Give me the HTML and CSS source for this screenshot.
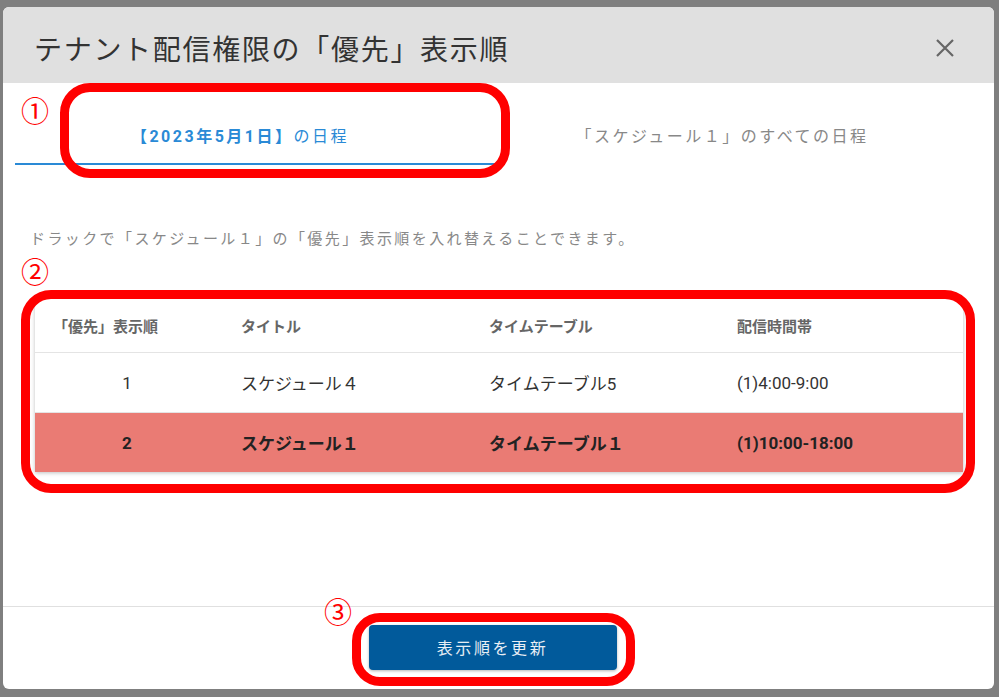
FILE: index.html
```html
<!DOCTYPE html>
<html lang="ja">
<head>
    <meta charset="UTF-8">
    <title>テナント配信権限の「優先」表示順</title>
    <link rel="stylesheet" href="styles.css">
</head>
<body>
    <div class="modal">
        <div class="modal-head">
            <h1>テナント配信権限の「優先」表示順</h1>
            <button class="close" type="button" aria-label="閉じる">
                <svg width="18" height="18" viewBox="0 0 18 18"><path d="M1 1 L17 17 M17 1 L1 17" stroke="#666" stroke-width="2.2" fill="none"/></svg>
            </button>
        </div>

        <div class="tabs">
            <div class="tab active"><b>【2023年5月1日】</b>の日程</div>
            <div class="tab">「スケジュール１」のすべての日程</div>
        </div>

        <div class="modal-body">
            <p class="hint">ドラックで「スケジュール１」の「優先」表示順を入れ替えることできます。</p>
            <div class="order-table">
                <div class="cell head first">「優先」表示順</div>
                <div class="cell head">タイトル</div>
                <div class="cell head">タイムテーブル</div>
                <div class="cell head">配信時間帯</div>

                <div class="cell first">1</div>
                <div class="cell">スケジュール４</div>
                <div class="cell">タイムテーブル5</div>
                <div class="cell">(1)4:00-9:00</div>

                <div class="cell first sel">2</div>
                <div class="cell sel">スケジュール１</div>
                <div class="cell sel">タイムテーブル１</div>
                <div class="cell sel">(1)10:00-18:00</div>
            </div>
        </div>

        <div class="modal-foot">
            <button class="btn-update" type="button">表示順を更新</button>
        </div>

        <!-- annotation marks -->
        <span class="mark mark-1">①</span>
        <span class="ring ring-1"></span>
        <span class="mark mark-2">②</span>
        <span class="ring ring-2"></span>
        <span class="mark mark-3">③</span>
        <span class="ring ring-3"></span>
    </div>
</body>
</html>
```

FILE: styles.css
```css
* {
    box-sizing: border-box;
}
body {
    margin: 0;
    padding: 7px 5px 0 3px;
    background-color: #7f7f7f;
    font-family: Roboto, "Noto Sans CJK JP", sans-serif;
    color: #333;
    height: 697px;
    overflow: hidden;
}
.modal {
    position: relative;
    width: 991px;
    height: 682px;
    background-color: #fff;
    border-radius: 6px;
    overflow: hidden;
    display: flex;
    flex-direction: column;
}
.modal-head {
    height: 76px;
    background-color: #e0e0e0;
    display: flex;
    align-items: center;
    justify-content: space-between;
    padding: 5px 40px 0 31px;
}
.modal-head h1 {
    margin: 0;
    font-size: 28px;
    font-weight: 400;
    letter-spacing: 1.7px;
    color: #333;
}
.close {
    border: none;
    background: none;
    padding: 0;
    display: flex;
    cursor: pointer;
}
.tabs {
    display: flex;
    margin-left: 12px;
    height: 82px;
}
.tab {
    width: 482px;
    padding: 40px 32px 0 0;
    text-align: center;
    font-size: 16px;
    letter-spacing: 2.5px;
    color: #888;
}
.tab.active {
    color: #2a8ad6;
    border-bottom: 2px solid #2a8ad6;
}
.tab.active b {
    font-weight: 700;
}
.modal-body {
    flex: 1;
    padding: 0 31px 0 27px;
}
.hint {
    margin: 62px 0 0;
    font-size: 15px;
    letter-spacing: 2.4px;
    color: #888;
}
.order-table {
    margin: 50px 0 0 5px;
    display: grid;
    grid-template-columns: 206px 248px 248px 1fr;
    grid-template-rows: 54px 60px 60px;
    box-shadow: 0 1px 4px rgba(0, 0, 0, 0.25);
}
.cell {
    display: flex;
    align-items: center;
    font-size: 17px;
    color: #333;
    border-top: 1px solid #e4e4e4;
}
.cell.head {
    font-size: 15px;
    font-weight: 700;
    color: #666;
    border-top: none;
}
.cell.first {
    justify-content: center;
    padding-right: 22px;
}
.cell.head.first {
    justify-content: flex-start;
    padding: 0 0 0 18px;
}
.cell.sel {
    background-color: #ea7b74;
    font-weight: 700;
    color: #222;
}
.modal-foot {
    height: 83px;
    border-top: 1px solid #e0e0e0;
    display: flex;
    align-items: center;
    justify-content: center;
    padding: 0 12px 2px 0;
}
.btn-update {
    width: 248px;
    height: 45px;
    border: none;
    border-radius: 4px;
    background-color: #015a9b;
    color: #e8eef5;
    font-family: inherit;
    font-size: 16px;
    letter-spacing: 2.6px;
    box-shadow: 0 1px 3px rgba(0, 0, 0, 0.3);
    cursor: pointer;
}
.mark {
    position: absolute;
    font-family: "Noto Sans CJK JP", sans-serif;
    font-size: 28px;
    line-height: 28px;
    color: #ff0000;
}
.mark-1 { left: 18px; top: 89px; }
.mark-2 { left: 18px; top: 250px; }
.mark-3 { left: 321px; top: 590px; }
.ring {
    position: absolute;
    border: 9px solid #ff0000;
    border-radius: 30px;
}
.ring-1 { left: 57px; top: 76px; width: 450px; height: 95px; }
.ring-2 { left: 18px; top: 283px; width: 954px; height: 203px; }
.ring-3 { left: 349px; top: 606px; width: 283px; height: 73px; border-radius: 28px; }
```
